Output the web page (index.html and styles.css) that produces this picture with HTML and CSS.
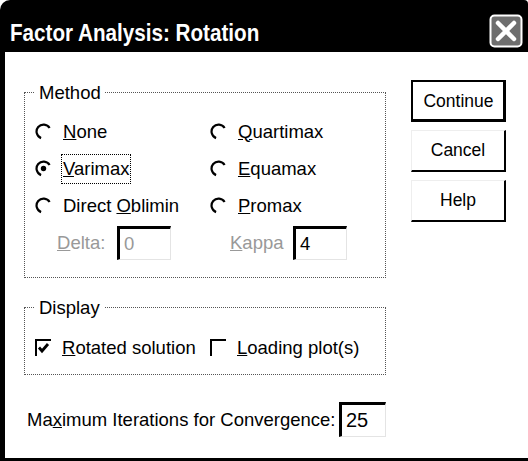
FILE: index.html
```html
<!DOCTYPE html>
<html lang="en">
<head>
    <meta charset="UTF-8">
    <title>Factor Analysis: Rotation</title>
    <link rel="stylesheet" href="styles.css">
</head>
<body>

    <div class="dialog">
        <div class="titlebar">
            <span class="title">Factor Analysis: Rotation</span>
            <span class="close">
                <svg width="34" height="34" viewBox="0 0 34 34">
                    <rect x="1.5" y="1.5" width="31" height="31" rx="4" fill="#6e6e6e" stroke="#fff" stroke-width="2"/>
                    <path d="M9 9 L25 25 M25 9 L9 25" stroke="#fff" stroke-width="4.5" stroke-linecap="round"/>
                </svg>
            </span>
        </div>

        <div class="content">
            <div class="main">

                <fieldset class="group method">
                    <legend>Method</legend>
                    <div class="grid">
                        <label class="opt">
                            <svg class="radio" viewBox="0 0 17 17"><path d="M6.1 15.1 A7 7 0 1 1 14.6 5"/></svg>
                            <span><u>N</u>one</span>
                        </label>
                        <label class="opt">
                            <svg class="radio" viewBox="0 0 17 17"><path d="M6.1 15.1 A7 7 0 1 1 14.6 5"/></svg>
                            <span><u>Q</u>uartimax</span>
                        </label>

                        <label class="opt">
                            <svg class="radio" viewBox="0 0 17 17"><path d="M6.1 15.1 A7 7 0 1 1 14.6 5"/><circle cx="8.5" cy="8.5" r="2.7"/></svg>
                            <span class="focus"><u>V</u>arimax</span>
                        </label>
                        <label class="opt">
                            <svg class="radio" viewBox="0 0 17 17"><path d="M6.1 15.1 A7 7 0 1 1 14.6 5"/></svg>
                            <span><u>E</u>quamax</span>
                        </label>

                        <label class="opt">
                            <svg class="radio" viewBox="0 0 17 17"><path d="M6.1 15.1 A7 7 0 1 1 14.6 5"/></svg>
                            <span>Direct <u>O</u>blimin</span>
                        </label>
                        <label class="opt">
                            <svg class="radio" viewBox="0 0 17 17"><path d="M6.1 15.1 A7 7 0 1 1 14.6 5"/></svg>
                            <span><u>P</u>romax</span>
                        </label>

                        <div class="field delta">
                            <span class="lbl disabled"><u>D</u>elta:</span>
                            <span class="edit disabled">0</span>
                        </div>
                        <div class="field kappa">
                            <span class="lbl disabled"><u>K</u>appa</span>
                            <span class="edit">4</span>
                        </div>
                    </div>
                </fieldset>

                <fieldset class="group display">
                    <legend>Display</legend>
                    <div class="grid">
                        <label class="opt">
                            <svg class="check" viewBox="0 0 16 17"><path class="edge" d="M1 17 V1 H16"/><path class="tick" d="M4 8.5 L7 12 L13 5"/></svg>
                            <span><u>R</u>otated solution</span>
                        </label>
                        <label class="opt">
                            <svg class="check" viewBox="0 0 16 17"><path class="edge" d="M1 17 V1 H16"/></svg>
                            <span><u>L</u>oading plot(s)</span>
                        </label>
                    </div>
                </fieldset>

                <div class="iter">
                    <span>Ma<u>x</u>imum Iterations for Convergence:</span>
                    <span class="edit wide">25</span>
                </div>

            </div>

            <div class="buttons">
                <button class="default">Continue</button>
                <button>Cancel</button>
                <button>Help</button>
            </div>
        </div>
    </div>

</body>
</html>
```

FILE: styles.css
```css
body {
    margin: 0;
    background-color: #fff;
    font-family: "Liberation Sans", Arial, sans-serif;
    font-size: 18.5px;
    color: #000;
}

.dialog {
    width: 528px;
    height: 461px;
    display: flex;
    flex-direction: column;
}

.titlebar {
    height: 52px;
    background: #000;
    border-top-left-radius: 10px;
    border-top-right-radius: 4px;
    display: flex;
    justify-content: space-between;
    align-items: flex-start;
    padding: 0 5px 0 10px;
    box-sizing: border-box;
}

/* narrow bold caption, squeezed like the original font */
.title {
    color: #fff;
    font-weight: bold;
    font-size: 24px;
    line-height: 25px;
    margin-top: 20px;
    white-space: nowrap;
    transform: scaleX(0.86);
    transform-origin: left center;
}

.close {
    margin-top: 14px;
    width: 34px;
    height: 34px;
}

.close svg {
    display: block;
}

.content {
    flex: 1;
    display: flex;
    gap: 25px;
    border-left: 5px solid #000;
    border-bottom: 3px solid #000;
    padding: 28px 0 0 19px;
}

.main {
    width: 362px;
    display: flex;
    flex-direction: column;
}

fieldset.group {
    margin: 0;
    min-width: 0;
    border: 1px dotted #555;
    padding: 8px 0 16px 10px;
}

fieldset.display {
    margin-top: 17px;
    padding: 9px 0 8px 10px;
}

legend {
    padding: 0 4px;
    line-height: 25px;
}

.grid {
    display: grid;
    grid-template-columns: 175px 1fr;
    grid-auto-rows: 37px;
    align-items: center;
}

.opt {
    display: flex;
    align-items: center;
    gap: 11px;
    white-space: nowrap;
}

.radio {
    width: 17px;
    height: 17px;
    flex: none;
}

.radio path {
    fill: none;
    stroke: #000;
    stroke-width: 2.2;
}

.radio circle {
    fill: #000;
}

.check {
    width: 16px;
    height: 17px;
    flex: none;
}

.check .edge {
    fill: none;
    stroke: #000;
    stroke-width: 2;
}

.check .tick {
    fill: none;
    stroke: #000;
    stroke-width: 2.8;
}

.focus {
    border: 1px dotted #000;
    padding: 3px 1px;
    margin-left: -2px;
}

.field {
    display: flex;
    align-items: center;
}

.delta .lbl {
    padding-left: 22px;
    width: 60px;
}

.kappa .lbl {
    padding-left: 20px;
    width: 63px;
}

.disabled {
    color: #999;
}

.edit {
    width: 54px;
    height: 34px;
    box-sizing: border-box;
    border-top: 3px solid #000;
    border-left: 3px solid #000;
    border-right: 1px solid #e4e4e4;
    border-bottom: 1px solid #e4e4e4;
    padding-left: 4px;
    line-height: 30px;
}

.iter {
    margin-top: 27px;
    padding-left: 3px;
    display: flex;
    justify-content: space-between;
    align-items: center;
    white-space: nowrap;
}

.edit.wide {
    width: 47px;
    height: 35px;
    font-size: 20px;
}

.buttons {
    display: flex;
    flex-direction: column;
    gap: 8px;
}

button {
    width: 95px;
    height: 42px;
    background: #fff;
    font-family: inherit;
    font-size: 17.5px;
    color: #000;
    border-top: 1px solid #eee;
    border-left: 1px solid #eee;
    border-right: 2px solid #000;
    border-bottom: 2px solid #000;
    padding: 0;
}

button.default {
    border: 2px solid #000;
    box-shadow: inset -1px -1px 0 #000;
}
```
